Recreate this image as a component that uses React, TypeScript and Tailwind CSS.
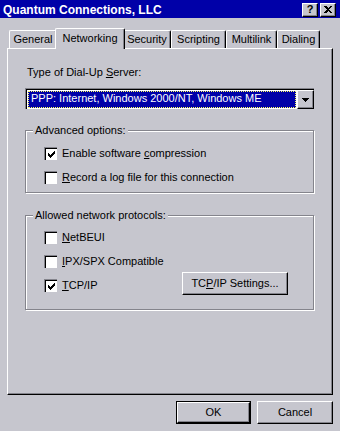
import React from "react";

const face = "bg-[#c6c6ce]";

function Check() {
  // classic 7x7 check glyph
  const px: [number, number][] = [
    [6, 0], [5, 1], [6, 1], [0, 2], [4, 2], [5, 2], [6, 2],
    [0, 3], [1, 3], [3, 3], [4, 3], [5, 3],
    [0, 4], [1, 4], [2, 4], [3, 4], [4, 4],
    [1, 5], [2, 5], [3, 5], [2, 6],
  ];
  return (
    <svg width="7" height="7" viewBox="0 0 7 7" shapeRendering="crispEdges">
      {px.map(([x, y]) => (
        <rect key={`${x}-${y}`} x={x} y={y} width="1" height="1" fill="#000" />
      ))}
    </svg>
  );
}

function CheckBox({ checked }: { checked?: boolean }) {
  return (
    <div className="w-[13px] h-[13px] shrink-0 border-t border-l border-[#84848c] border-r-white border-b-white">
      <div className="w-full h-full border-t border-l border-black border-r-[#dcdce0] border-b-[#dcdce0] bg-white flex items-center justify-center">
        {checked && <Check />}
      </div>
    </div>
  );
}

function Key({ children }: { children: React.ReactNode }) {
  return <span className="underline underline-offset-[1px]">{children}</span>;
}

function Option({ checked, children }: { checked?: boolean; children: React.ReactNode }) {
  return (
    <div className="flex items-center h-[13px]">
      <CheckBox checked={checked} />
      <span className="ml-[5px] leading-[13px] whitespace-nowrap">{children}</span>
    </div>
  );
}

function Group({ label, className, children }: { label: string; className: string; children: React.ReactNode }) {
  return (
    <div
      className={`relative border border-[#84848c] shadow-[inset_1px_1px_0_#fff,1px_1px_0_#fff] ${className}`}
    >
      <span className={`absolute top-[-7px] left-[7px] px-[2px] leading-[13px] ${face}`}>{label}</span>
      {children}
    </div>
  );
}

function Button({ children, isDefault, className = "" }: { children: React.ReactNode; isDefault?: boolean; className?: string }) {
  const inner = (
    <div className="h-full w-full flex items-center justify-center border-t border-l border-white border-r border-b border-r-black border-b-black shadow-[inset_-1px_-1px_0_#84848c] leading-[13px]">
      {children}
    </div>
  );
  if (isDefault) {
    return <div className={`border border-black ${className}`}>{inner}</div>;
  }
  return <div className={className}>{inner}</div>;
}

function Tab({ label, width, selected }: { label: string; width: string; selected?: boolean }) {
  if (selected) {
    return (
      <div className={`${width} shrink-0 relative z-10 -mx-[2px] -mb-px h-[21px] pt-[3px] text-center rounded-tl-[2px] rounded-tr-[2px] border-l border-t border-white border-r border-r-black shadow-[inset_-1px_0_0_#84848c] ${face}`}>
        {label}
      </div>
    );
  }
  return (
    <div className={`${width} shrink-0 h-[18px] pt-[2px] text-center rounded-tl-[2px] rounded-tr-[2px] border-l border-t border-white border-r border-r-black shadow-[inset_-1px_0_0_#84848c]`}>
      {label}
    </div>
  );
}

function TitleButton({ children }: { children: React.ReactNode }) {
  return (
    <div className={`w-[16px] h-[14px] ${face} border-t border-l border-white border-r border-b border-r-black border-b-black shadow-[inset_-1px_-1px_0_#84848c] flex items-center justify-center text-[11px] font-bold leading-none text-black`}>
      {children}
    </div>
  );
}

export default function App() {
  return (
    <div className={`w-[340px] h-[431px] overflow-hidden flex flex-col ${face} font-['Liberation_Sans',Arial,sans-serif] text-[11px] leading-[13px] text-black`}>
      {/* Title bar */}
      <div className="h-[18px] bg-[#0000a8] flex items-center justify-between pl-[3px] pr-[4px] pt-px">
        <span className="text-white font-bold text-[12px] leading-[14px]">Quantum Connections, LLC</span>
        <div className="flex gap-[2px]">
          <TitleButton>?</TitleButton>
          <TitleButton>
            <svg width="8" height="7" viewBox="0 0 8 7" shapeRendering="crispEdges">
              <path d="M0 0h2l2 2 2-2h2L5 3.5 8 7H6L4 5 2 7H0l3-3.5z" fill="#000" />
            </svg>
          </TitleButton>
        </div>
      </div>

      {/* Tabs */}
      <div className="mt-[10px] ml-[9px] flex items-end h-[20px]">
        <Tab label="General" width="w-[48px]" />
        <Tab label="Networking" width="w-[70px]" selected />
        <Tab label="Security" width="w-[48px]" />
        <Tab label="Scripting" width="w-[55px]" />
        <Tab label="Multilink" width="w-[51px]" />
        <Tab label="Dialing" width="w-[43px]" />
      </div>

      {/* Tab panel */}
      <div className="ml-[7px] w-[326px] h-[347px] border-l border-t border-white border-r border-b border-r-black border-b-black shadow-[inset_-1px_-1px_0_#84848c] pl-[17px] pr-[18px] pt-[17px] flex flex-col">
        <div className="pl-[2px]">
          Type of Dial-Up <Key>S</Key>erver:
        </div>

        {/* Combo box */}
        <div className="mt-[9px] h-[21px] w-[289px] border-t border-l border-[#84848c] border-r-white border-b-white">
          <div className="h-full w-full flex border-t border-l border-black border-r-[#dcdce0] border-b-[#dcdce0] bg-white">
            <div className="flex-1 p-[1px]">
              <div className="h-full bg-[#0000a8] text-white outline-1 outline-dotted outline-[#ffff60] -outline-offset-1 pl-[3px] leading-[15px]">
                PPP: Internet, Windows 2000/NT, Windows ME
              </div>
            </div>
            <div className={`w-[17px] h-full ${face} border-t border-l border-white border-r border-b border-r-black border-b-black shadow-[inset_-1px_-1px_0_#84848c] flex items-center justify-center`}>
              <svg width="7" height="4" viewBox="0 0 7 4" shapeRendering="crispEdges">
                <path d="M0 0h7v1H6v1H5v1H4v1H3V3H2V2H1V1H0z" fill="#000" />
              </svg>
            </div>
          </div>
        </div>

        <Group label="Advanced options:" className="mt-[21px] h-[63px] pl-[18px] pt-[16px]">
          <div className="flex flex-col gap-[11px]">
            <Option checked>
              Enable software <Key>c</Key>ompression
            </Option>
            <Option>
              <Key>R</Key>ecord a log file for this connection
            </Option>
          </div>
        </Group>

        <Group label="Allowed network protocols:" className="mt-[22px] h-[95px] pl-[18px] pt-[15px]">
          <div className="flex flex-col gap-[11px]">
            <Option>
              <Key>N</Key>etBEUI
            </Option>
            <Option>
              <Key>I</Key>PX/SPX Compatible
            </Option>
            <div className="flex items-center h-[13px]">
              <Option checked>
                <Key>T</Key>CP/IP
              </Option>
              <Button className="ml-auto mr-[25px] mb-[4px] w-[106px] h-[23px]">
                TC<Key>P</Key>/IP Settings...
              </Button>
            </div>
          </div>
        </Group>
      </div>

      {/* Dialog buttons */}
      <div className="mt-[6px] flex justify-end gap-[6px] pr-[7px]">
        <Button isDefault className="w-[75px] h-[23px]">
          OK
        </Button>
        <Button className="w-[76px] h-[23px]">Cancel</Button>
      </div>
    </div>
  );
}
